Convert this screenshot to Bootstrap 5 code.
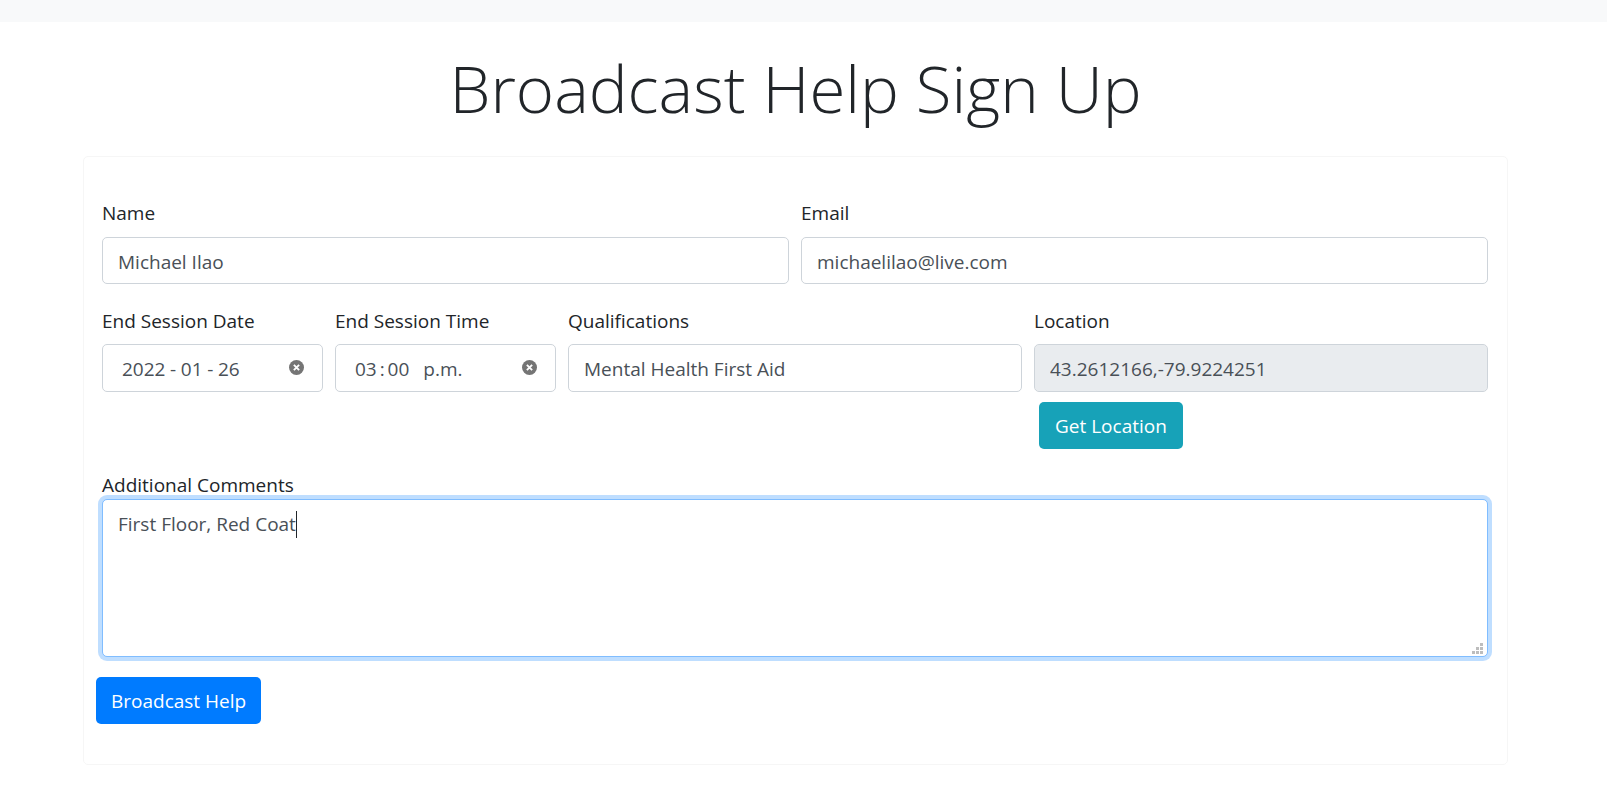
<!DOCTYPE html>
<html lang="en">
<head>
  <meta charset="UTF-8">
  <title>Broadcast Help Sign Up</title>
  <link href="https://cdn.jsdelivr.net/npm/bootstrap@5.3.3/dist/css/bootstrap.min.css" rel="stylesheet">
  <style>
    body { font-family: "Open Sans", "Liberation Sans", sans-serif; color: #212529; background: #fff; }
    .top-strip { height: 22px; background-color: #f8f9fa; }
    .page-wrap { width: 1425px; margin-left: 83px; }
    .page-title { font-size: 65.3px; font-weight: 300; line-height: 84px; text-align: center; margin: 24px 0 26px; }
    .form-box { height: 609px; border: 1px solid #f6f6f6; border-radius: 5px; padding: 40px 19px 0 18px; }
    .form-row { --bs-gutter-x: 12px; margin-bottom: 20px; }
    .form-box label { font-size: 19px; line-height: 30px; padding-top: 1px; margin-bottom: 9px; display: block; }
    .form-row.tall label { padding-top: 2px; margin-bottom: 8px; }
    .form-box .form-control { font-size: 19px; line-height: 30px; color: #495057; border-color: #ced4da; border-radius: 5px; height: 47px; padding: 8px 15px 6px; }
    .form-row.tall .form-control { height: 48px; }
    .form-box .form-control:disabled { background-color: #e9ecef; }
    .form-box .stamp { display: flex; align-items: center; justify-content: space-between; padding: 7px 18px 7px 19px; }
    .stamp span { padding-top: 1px; word-spacing: -0.3px; }
    .stamp svg { width: 15px; height: 15px; margin-top: -1px; }
    .stamp .time-text { word-spacing: -2px; }
    .time-text b { font-weight: 400; margin-left: 14px; }
    .act-btn { color: #fff; font-size: 19px; line-height: 30px; height: 47px; padding: 7px 16px; border-radius: 5px; border: 0; }
    .act-btn:hover { color: #fff; }
    .loc-btn { background-color: #17a2b8; margin: 10px 0 0 5px; }
    .send-btn { background-color: #007bff; margin: 20px 0 0 -6px; padding-left: 15px; padding-right: 15px; }
    .form-box label.note-label { padding-top: 2px; margin-bottom: 0; height: 30px; line-height: 28px; }
    .note-wrap { position: relative; }
    .form-box .note-area { height: 158px; padding-top: 9px; border-color: #80bdff; box-shadow: 0 0 0 4px rgba(0,123,255,.25); }
    .caret-bar { display: inline-block; width: 1px; height: 27px; background: #212529; vertical-align: -7px; }
    .note-grip { position: absolute; right: 5px; bottom: 3px; width: 11px; height: 11px; }
  </style>
</head>
<body>

<div class="top-strip"></div>
<div class="page-wrap">
  <h1 class="page-title">Broadcast Help Sign Up</h1>

  <div class="form-box">
    <div class="row form-row">
      <div class="col-6"><label for="f1">Name</label><input id="f1" class="form-control" value="Michael Ilao"></div>
      <div class="col-6"><label for="f2">Email</label><input id="f2" class="form-control" value="michaelilao@live.com"></div>
    </div>
    <div class="row form-row tall">
      <div class="col-2">
        <label>End Session Date</label>
        <div class="form-control stamp">
          <span>2022 - 01 - 26</span>
          <svg viewBox="0 0 16 16"><circle cx="8" cy="8" r="8" fill="#757575"/><path d="M5.2 5.2l5.6 5.6M10.8 5.2l-5.6 5.6" stroke="#fff" stroke-width="2"/></svg>
        </div>
      </div>
      <div class="col-2">
        <label>End Session Time</label>
        <div class="form-control stamp">
          <span class="time-text">03 : 00<b>p.m.</b></span>
          <svg viewBox="0 0 16 16"><circle cx="8" cy="8" r="8" fill="#757575"/><path d="M5.2 5.2l5.6 5.6M10.8 5.2l-5.6 5.6" stroke="#fff" stroke-width="2"/></svg>
        </div>
      </div>
      <div class="col-4"><label for="f5">Qualifications</label><input id="f5" class="form-control" value="Mental Health First Aid"></div>
      <div class="col-4">
        <label for="f6">Location</label><input id="f6" class="form-control" value="43.2612166,-79.9224251" disabled>
        <button class="btn act-btn loc-btn">Get Location</button>
      </div>
    </div>
    <label class="note-label">Additional Comments</label>
    <div class="note-wrap">
      <div class="form-control note-area">First Floor, Red Coat<span class="caret-bar"></span></div>
      <svg class="note-grip" viewBox="0 0 11 11" fill="#bdbdbd">
        <rect x="8" y="0" width="3" height="3"/>
        <rect x="4" y="4" width="3" height="3"/><rect x="8" y="4" width="3" height="3"/>
        <rect x="0" y="8" width="3" height="3"/><rect x="4" y="8" width="3" height="3"/><rect x="8" y="8" width="3" height="3"/>
      </svg>
    </div>
    <button class="btn act-btn send-btn">Broadcast Help</button>
  </div>
</div>

</body>
</html>
